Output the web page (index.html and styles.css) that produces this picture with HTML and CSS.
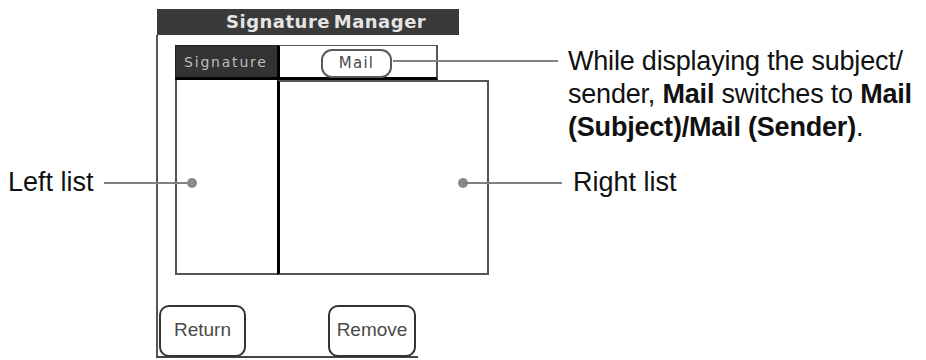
FILE: index.html
```html
<!DOCTYPE html>
<html>
<head>
<meta charset="utf-8">
<link rel="stylesheet" href="styles.css">
</head>
<body>
<div class="page">
  <div class="device">
    <div class="titlebar">Signature Manager</div>
    <div class="body">
      <div class="tabs">
        <div class="tab tab-sig">Signature</div>
        <div class="tab tab-mail"><span class="pill">Mail</span></div>
      </div>
      <div class="lists">
        <div class="list list-left"></div>
        <div class="list list-right"></div>
      </div>
      <div class="buttons">
        <div class="btn btn-return">Return</div>
        <div class="btn btn-remove">Remove</div>
      </div>
    </div>
  </div>

  <div class="callout callout-mail">
    <div class="lead lead-mail"></div>
    <p class="note">While displaying the subject/<br>sender, <b>Mail</b> switches to <b>Mail</b><br><b>(Subject)/Mail (Sender)</b>.</p>
  </div>

  <div class="callout callout-left">
    <span class="label">Left list</span>
    <span class="lead lead-left"></span>
    <span class="dot"></span>
  </div>

  <div class="callout callout-right">
    <span class="dot"></span>
    <span class="lead lead-right"></span>
    <span class="label">Right list</span>
  </div>
</div>
</body>
</html>
```
FILE: styles.css
```css
html, body {
  margin: 0;
  padding: 0;
  background: #fff;
}
.page {
  position: relative;
  width: 926px;
  height: 360px;
  overflow: hidden;
  font-family: "Liberation Sans", Arial, sans-serif;
  color: #111;
}
.device {
  position: absolute;
  left: 156px;
  top: 9px;
  width: 303px;
  height: 349px;
}
.titlebar {
  height: 26px;
  margin-left: 1px;
  background: #3a3a3a;
  color: #e4e4e4;
  font-family: "DejaVu Sans", sans-serif;
  font-weight: bold;
  font-size: 18px;
  letter-spacing: 0.5px;
  word-spacing: -3px;
  line-height: 26px;
  padding-left: 69px;
  box-sizing: border-box;
  white-space: nowrap;
}
.body {
  height: 323px;
  border-left: 2px solid #555;
  border-bottom: 2px solid #444;
  width: 262px;
  box-sizing: border-box;
  padding-top: 10px;
  padding-left: 17px;
  display: flex;
  flex-direction: column;
}
.tabs {
  display: flex;
  height: 35px;
}
.tab {
  flex: none;
  box-sizing: border-box;
  height: 35px;
  border-bottom: 3px solid #000;
}
.tab-sig {
  width: 102px;
  background: #333;
  color: #bdbdbd;
  font-family: "DejaVu Sans", sans-serif;
  font-size: 14px;
  letter-spacing: 1.8px;
  line-height: 32px;
  padding-left: 8px;
  border-top: 1px solid #222;
  border-left: 1px solid #222;
}
.tab-mail {
  width: 161px;
  border-top: 1px solid #555;
  border-right: 2px solid #555;
  border-left: 3px solid #000;
  display: flex;
  justify-content: center;
  align-items: flex-end;
}
.pill {
  display: block;
  width: 71px;
  height: 29px;
  box-sizing: border-box;
  border: 2px solid #5a5a5a;
  border-radius: 11px;
  background: #fff;
  margin-bottom: -1px;
  margin-left: -3px;
  text-align: center;
  font-family: "DejaVu Sans", sans-serif;
  font-size: 15px;
  letter-spacing: 1.2px;
  line-height: 25px;
  color: #4a4a4a;
}
.lists {
  display: flex;
  height: 195px;
}
.list {
  flex: none;
  box-sizing: border-box;
  height: 195px;
}
.list-left {
  width: 102px;
  border-left: 2px solid #555;
  border-bottom: 2px solid #555;
}
.list-right {
  width: 212px;
  border-left: 3px solid #000;
  border-top: 2px solid #555;
  border-right: 2px solid #555;
  border-bottom: 2px solid #555;
}
.buttons {
  display: flex;
  margin-top: 30px;
  margin-left: -16px;
  height: 52px;
}
.btn {
  flex: none;
  box-sizing: border-box;
  height: 52px;
  border: 2px solid #333;
  border-radius: 10px;
  background: #fff;
  font-family: "Liberation Sans", Arial, sans-serif;
  font-size: 19px;
  color: #4a4a4a;
  display: flex;
  align-items: center;
  justify-content: center;
  padding-bottom: 2px;
}
.btn-return {
  width: 87px;
}
.btn-remove {
  width: 88px;
  margin-left: 82px;
}

/* callouts */
.callout {
  position: absolute;
  display: flex;
  align-items: center;
}
.lead {
  display: block;
  height: 2px;
  background: #808080;
}
.dot {
  display: block;
  width: 10px;
  height: 10px;
  border-radius: 50%;
  background: #8a8a8a;
}
.label {
  font-size: 27px;
  line-height: 33px;
  color: #111;
  white-space: nowrap;
}
.callout-mail {
  left: 393px;
  top: 45px;
  align-items: flex-start;
}
.lead-mail {
  width: 165px;
  margin-top: 15px;
}
.note {
  margin: 0 0 0 10px;
  font-size: 27px;
  line-height: 33px;
  color: #111;
  white-space: nowrap;
  letter-spacing: -0.2px;
}
.note b {
  font-weight: bold;
}
.callout-left {
  left: 8px;
  top: 166px;
}
.lead-left {
  width: 88px;
  margin-left: 10px;
}
.callout-left .dot {
  margin-left: -5px;
}
.callout-right {
  left: 458px;
  top: 166px;
}
.lead-right {
  width: 99px;
  margin-left: -5px;
}
.callout-right .label {
  margin-left: 11px;
}
```
